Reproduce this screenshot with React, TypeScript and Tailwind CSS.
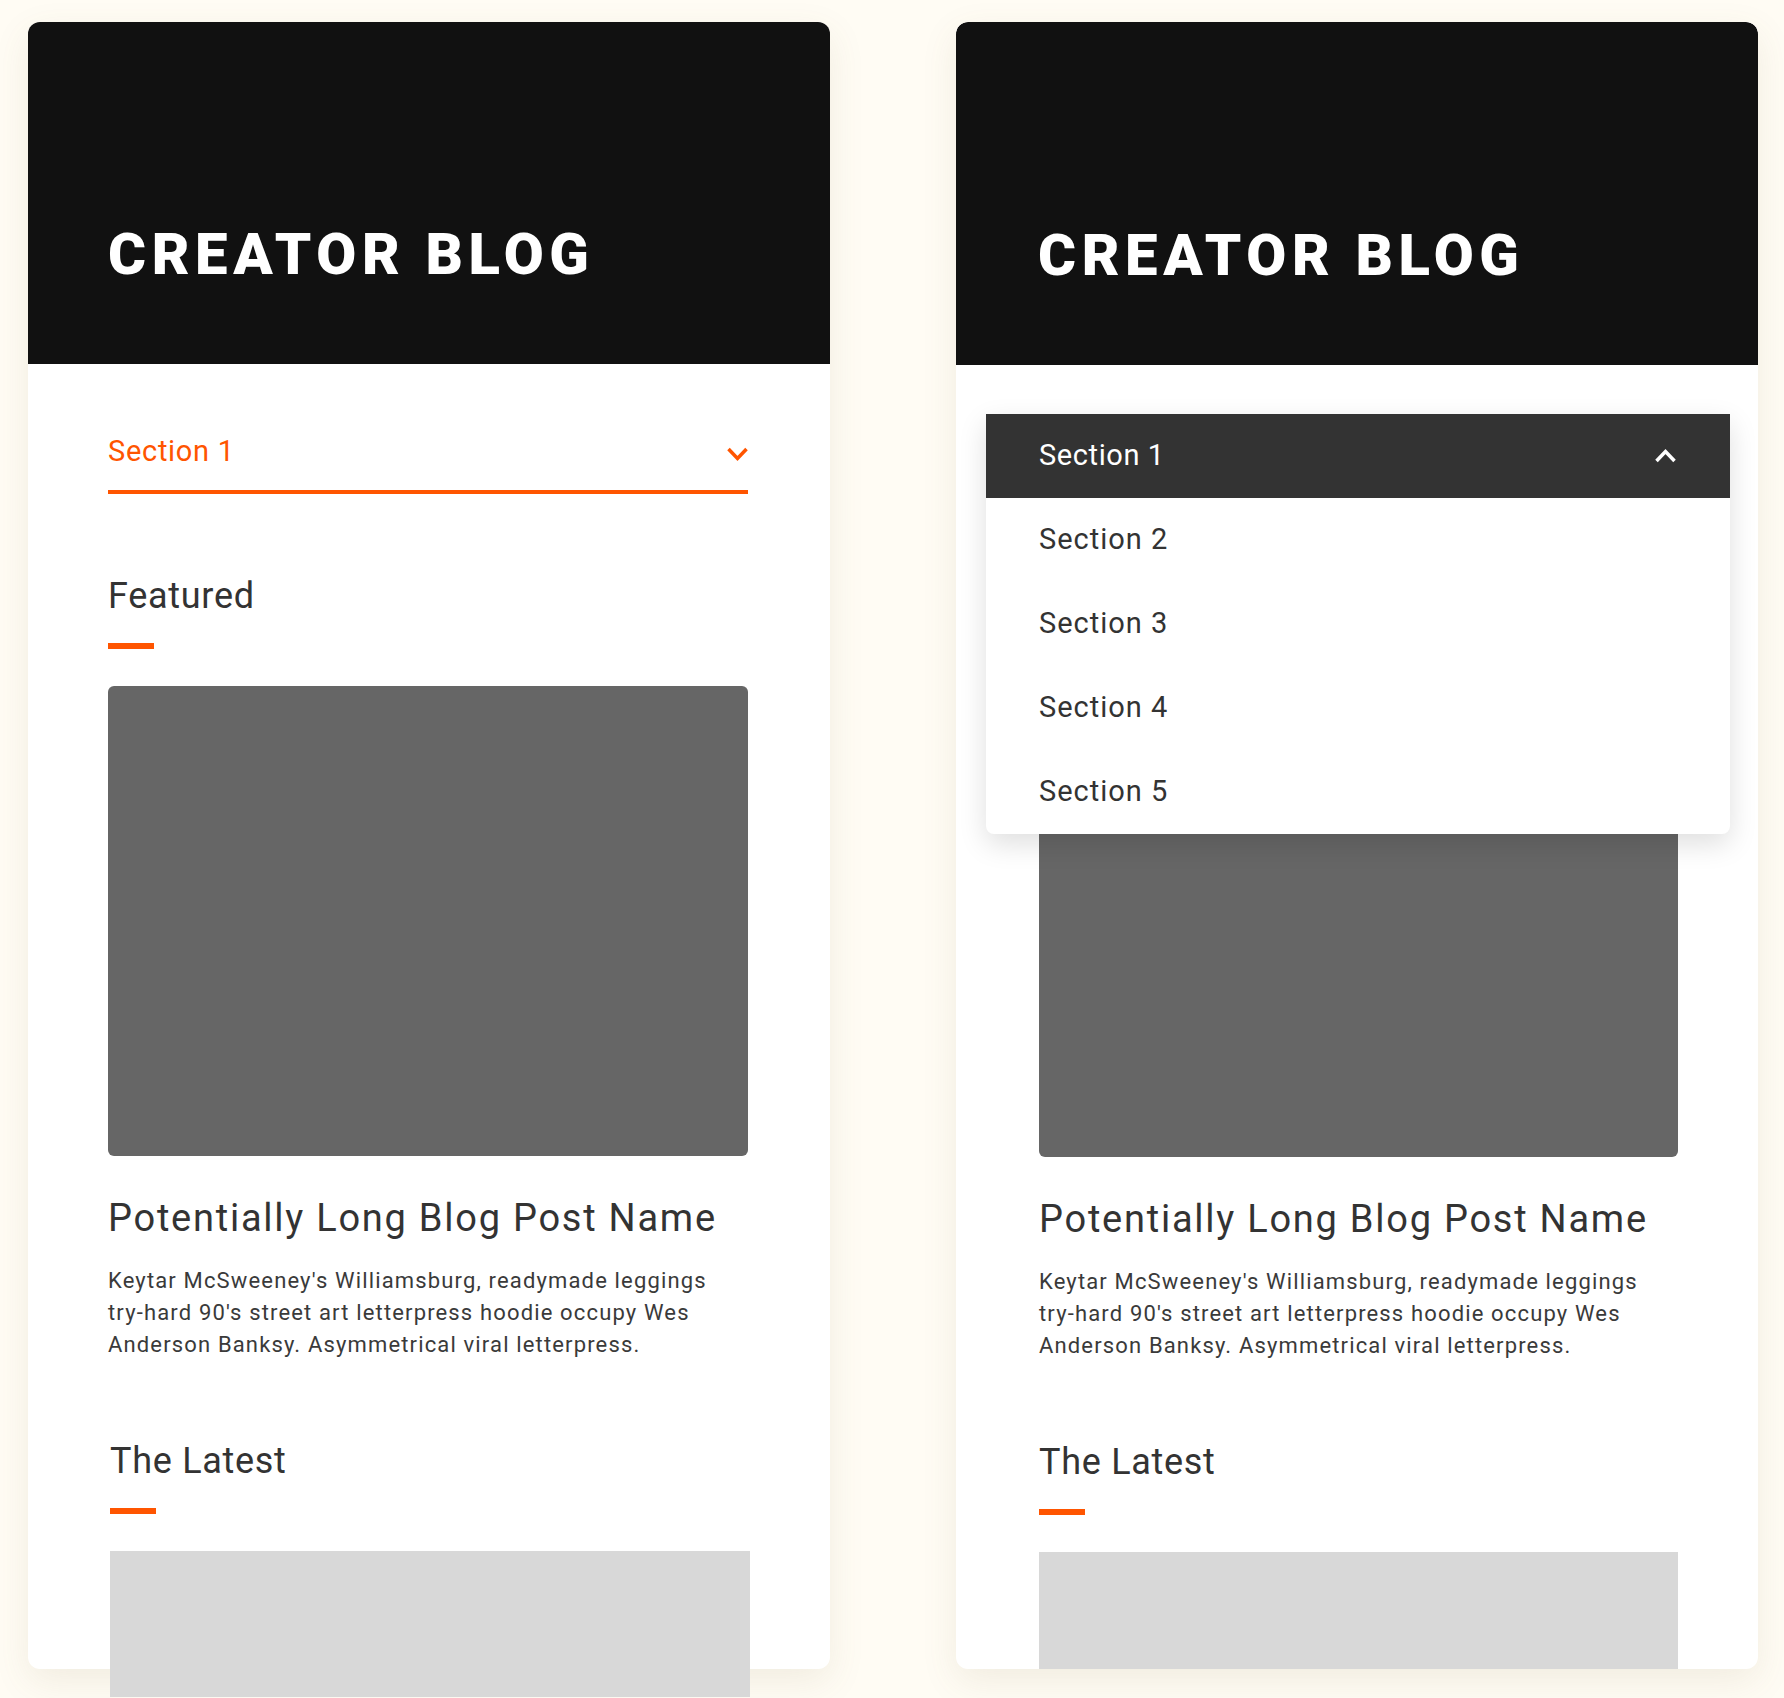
import React from "react";

type CardProps = {
  open?: boolean;
  shifted?: boolean;
};

const sections = ["Section 1", "Section 2", "Section 3", "Section 4", "Section 5"];

const Chevron = ({ up, color }: { up?: boolean; color: string }) => (
  <svg width="23" height="16" viewBox="0 0 23 16" fill="none">
    <polyline
      points={up ? "2.5,13 11.5,3.5 20.5,13" : "2.5,3 11.5,12.5 20.5,3"}
      stroke={color}
      strokeWidth="3.5"
    />
  </svg>
);

const SectionHeading = ({ title }: { title: string }) => (
  <div>
    <h2 className="text-[36px] leading-[44px] tracking-[0.7px] text-[#333]">{title}</h2>
    <div className="mt-[25px] h-[6px] w-[46px] bg-[#ff5500]" />
  </div>
);

const Dropdown = () => (
  <div className="absolute left-[30px] right-[28px] top-[392px] rounded-b-lg bg-white shadow-[0_10px_28px_rgba(0,0,0,0.13)]">
    <div className="flex h-[84px] items-center justify-between bg-[#333] pl-[53px] pr-[53px]">
      <span className="text-[29px] tracking-[0.6px] text-white">Section 1</span>
      <Chevron up color="#ffffff" />
    </div>
    {sections.slice(1).map((section) => (
      <div
        key={section}
        className="flex h-[84px] items-center pl-[53px] text-[29px] tracking-[1px] text-[#333]"
      >
        {section}
      </div>
    ))}
  </div>
);

const Card: React.FC<CardProps> = ({ open, shifted }) => {
  // the open card keeps its select and heading under the menu, hidden
  const covered = open ? "invisible" : "";

  return (
    <div
      className={
        open
          ? "relative h-[1647px] w-[802px] shrink-0 overflow-hidden rounded-xl bg-white shadow-[0_12px_36px_rgba(120,100,60,0.10)]"
          : "relative h-[1647px] w-[802px] shrink-0 rounded-xl bg-white shadow-[0_12px_36px_rgba(120,100,60,0.10)]"
      }
    >
      <header
        className={
          open
            ? "flex h-[343px] items-end rounded-t-xl bg-[#111] pb-[80px] pl-[82px]"
            : "flex h-[342px] items-end rounded-t-xl bg-[#111] pb-[80px] pl-[80px]"
        }
      >
        <h1 className="text-[58px] font-black leading-[60px] tracking-[5.6px] text-white">
          CREATOR BLOG
        </h1>
      </header>

      <div className={open ? "pl-[83px] pr-[80px] pt-[50px]" : "pl-[80px] pr-[82px] pt-[50px]"}>
        <div
          className={`flex h-[80px] items-center justify-between border-b-4 border-[#ff5500] ${covered}`}
        >
          <span className="text-[29px] tracking-[0.7px] text-[#ff5500]">Section 1</span>
          <span className="mt-[4px] mr-[-1px]">
            <Chevron color="#ff5500" />
          </span>
        </div>

        <div className="mt-[80px]">
          <div className={covered}>
            <SectionHeading title="Featured" />
          </div>
          <div className="mt-[37px] h-[470px] rounded-[6px] bg-[#666]" />
          <h3 className="mt-[39px] text-[38px] leading-[46px] tracking-[1.75px] text-[#333]">
            Potentially Long Blog Post Name
          </h3>
          <p className="mt-[24px] max-w-[620px] text-[22px] leading-[32px] tracking-[1.15px] text-[#3a3a3a]">
            Keytar McSweeney's Williamsburg, readymade leggings try-hard 90's street art
            letterpress hoodie occupy Wes Anderson Banksy. Asymmetrical viral letterpress.
          </p>
        </div>

        <div className={shifted ? "ml-[2px] mr-[-2px] mt-[78px]" : "mt-[78px]"}>
          <SectionHeading title="The Latest" />
          <div className="mt-[37px] h-[146px] bg-[#d8d8d8]" />
        </div>
      </div>

      {open && <Dropdown />}
    </div>
  );
};

const App = () => {
  return (
    <div className="h-[1698px] overflow-hidden bg-[#fffcf4] font-['Roboto',_sans-serif]">
      <div className="flex gap-[126px] pl-[28px] pt-[22px]">
        <Card shifted />
        <Card open />
      </div>
    </div>
  );
};

export default App;
